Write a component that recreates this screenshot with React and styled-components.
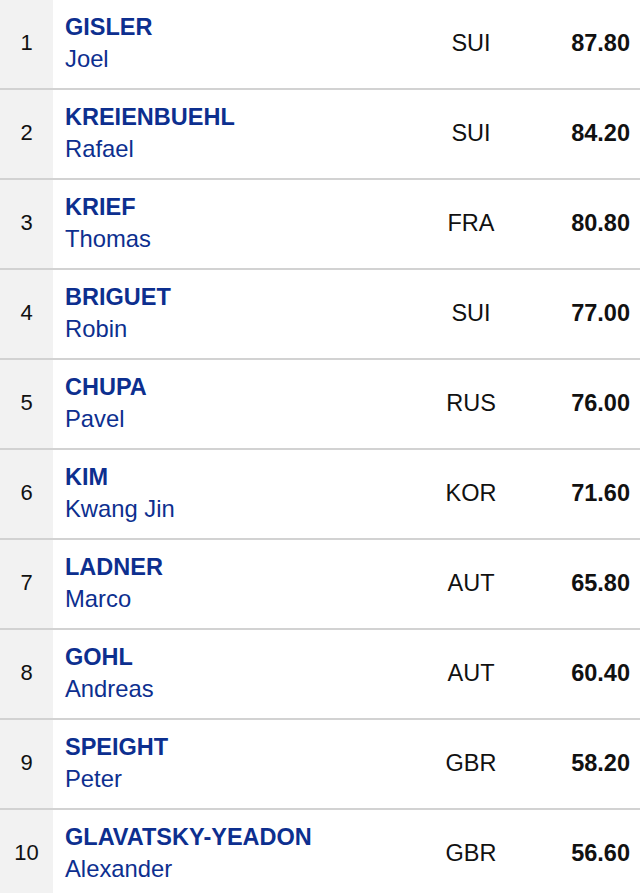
import React from "react";
import styled, { createGlobalStyle } from "styled-components";

const GlobalStyle = createGlobalStyle`
  body {
    margin: 0;
    background: #ffffff;
    font-family: "Liberation Sans", Arial, sans-serif;
  }
`;

const Table = styled.div`
  display: flex;
  flex-direction: column;
  width: 640px;
  height: 893px;
  overflow: hidden;
`;

const Row = styled.div`
  display: grid;
  grid-template-columns: 53px 1fr 142px 98px;
  height: 88px;
  flex-shrink: 0;
  border-bottom: 2px solid #d2d2d2;
`;

const Rank = styled.div`
  display: flex;
  align-items: center;
  justify-content: center;
  background: #f2f2f2;
  color: #111;
  font-size: 22px;
  padding-bottom: 2px;
`;

const Athlete = styled.div`
  display: flex;
  flex-direction: column;
  justify-content: center;
  padding-left: 12px;
  padding-bottom: 2px;
  color: #0d2f8f;
  font-size: 23.8px;
  line-height: 31px;
`;

const Surname = styled.span`
  font-weight: bold;
  font-size: 23.5px;
`;

const Nation = styled.div`
  display: flex;
  align-items: center;
  justify-content: center;
  font-size: 23.5px;
  color: #111;
  padding-bottom: 2px;
`;

const Score = styled.div`
  display: flex;
  align-items: center;
  justify-content: flex-end;
  padding-right: 10px;
  padding-bottom: 2px;
  font-size: 23.5px;
  font-weight: bold;
  color: #111;
`;

const results = [
  ["GISLER", "Joel", "SUI", "87.80"],
  ["KREIENBUEHL", "Rafael", "SUI", "84.20"],
  ["KRIEF", "Thomas", "FRA", "80.80"],
  ["BRIGUET", "Robin", "SUI", "77.00"],
  ["CHUPA", "Pavel", "RUS", "76.00"],
  ["KIM", "Kwang Jin", "KOR", "71.60"],
  ["LADNER", "Marco", "AUT", "65.80"],
  ["GOHL", "Andreas", "AUT", "60.40"],
  ["SPEIGHT", "Peter", "GBR", "58.20"],
  ["GLAVATSKY-YEADON", "Alexander", "GBR", "56.60"],
];

export default function App() {
  return (
    <>
      <GlobalStyle />
      <Table>
        {results.map(([last, first, nat, score], i) => (
          <Row key={last}>
            <Rank>{i + 1}</Rank>
            <Athlete>
              <Surname>{last}</Surname>
              <span>{first}</span>
            </Athlete>
            <Nation>{nat}</Nation>
            <Score>{score}</Score>
          </Row>
        ))}
      </Table>
    </>
  );
}
